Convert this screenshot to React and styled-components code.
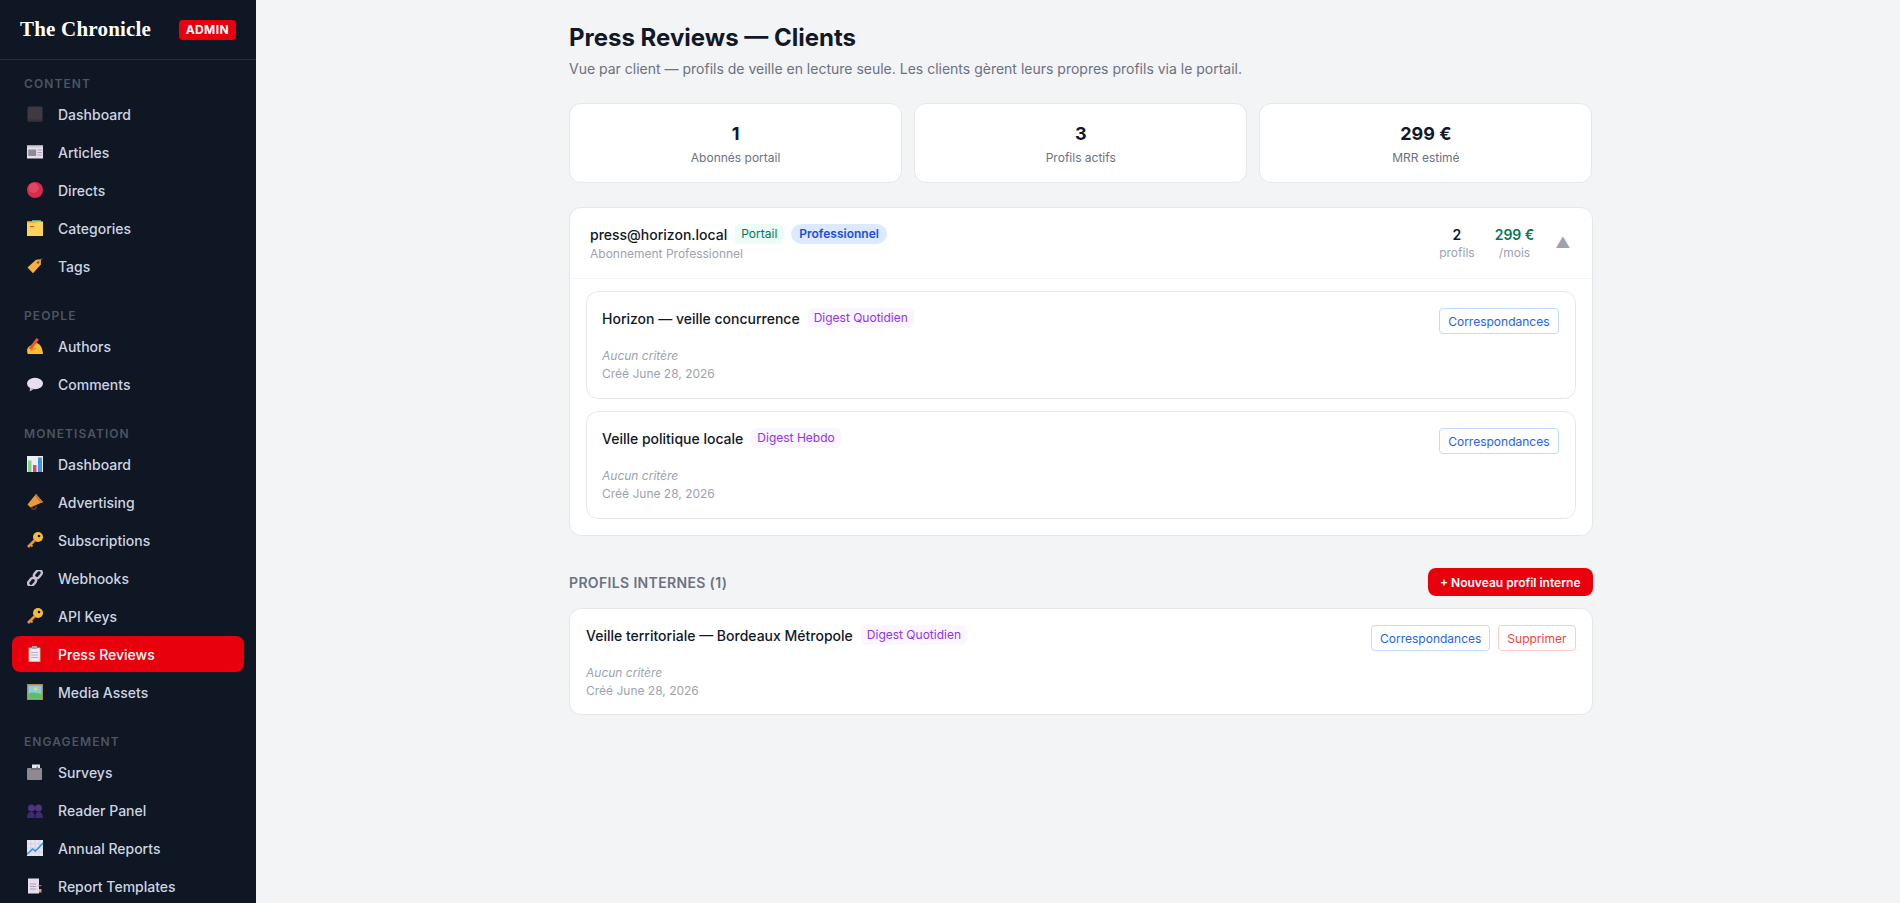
import styled, { createGlobalStyle } from "styled-components";

const GlobalStyle = createGlobalStyle`
  html, body { margin: 0; padding: 0; height: 100%; overflow: hidden; }
  body { font-family: Inter, "Liberation Sans", sans-serif; background: #f3f4f6; color: #111827; }
  * { box-sizing: border-box; }
`;

const Svg = ({ children }) => <IconSvg viewBox="0 0 16 16">{children}</IconSvg>;

const icons = {
  square: <Svg><rect x="0.5" y="0.5" width="15" height="15" rx="1.5" fill="#3d3a42" /><rect x="0.5" y="13.5" width="15" height="2" rx="1" fill="#322f37" /></Svg>,
  news: <Svg><rect y="1.5" width="16" height="13" fill="#e6e0ea" /><rect y="1.5" width="16" height="2" fill="#cfc8d6" /><rect x="1.2" y="5.5" width="8" height="6.5" fill="#8f8a98" /><path d="M10.5 6h4.5M10.5 8.5h4.5M10.5 11h4.5" stroke="#a9a3b2" /></Svg>,
  red: <Svg><circle cx="8" cy="8" r="8" fill="#d92c4c" /><circle cx="6.5" cy="6" r="5" fill="#ef5a72" opacity=".55" /></Svg>,
  folder: <Svg><rect x="5" y="0" width="9" height="2.5" fill="#5aa469" /><rect y="1.5" width="16" height="14.5" fill="#fdd35c" /><rect y="1.5" width="9" height="1.6" fill="#f2b63c" /><rect x="3" y="6" width="4" height="1.2" fill="#e4573d" /></Svg>,
  tag: <Svg><path d="M0.5 9.5 9 1.8l5-.5-.2 5.3-7.8 8.6z" fill="#f8b13f" /><circle cx="11" cy="4.5" r="1.3" fill="#8a5a20" /><path d="M11.5 4 15 .5" stroke="#888" /></Svg>,
  writing: <Svg><path d="M.8 16c-1.3-3-.8-6.5 1.7-7.8l6-3.2c3.7-.5 7 4 7.5 11z" fill="#fbc02d" /><path d="M1.5 10.5 9.5 0l2.4 1.8-7.2 10z" fill="#ea5a2e" /><path d="M3.5 13 9 10" stroke="#e88a20" strokeWidth="1.2" /></Svg>,
  comment: <Svg><ellipse cx="8" cy="7.5" rx="8" ry="5.7" fill="#e6def2" /><path d="M3 11.5l-.3 4 4.5-2.8z" fill="#c7bcd8" /></Svg>,
  chart: <Svg><rect width="16" height="16" fill="#f0eef3" /><rect x="1" y="4.5" width="3.5" height="11.5" fill="#7ed67e" /><rect x="6" y="9" width="3.5" height="7" fill="#ea3f86" /><rect x="11" y="1.5" width="4" height="14.5" fill="#3b98db" /></Svg>,
  mega: <Svg><path d="M9 0 16 8 3.5 13.5.5 10.5z" fill="#e99a3d" /><path d="M9 0 16 8l-2.5 1.1L8 1.5z" fill="#c9752a" /><path d="M4.5 13c.2 3.5 4.2 3.2 5-.8" fill="none" stroke="#5c3a22" strokeWidth="1.8" /></Svg>,
  key: <Svg><circle cx="11" cy="5" r="5" fill="#f6bd3a" /><circle cx="12" cy="4" r="1.3" fill="#0f1624" /><path d="M8 8 1 15" stroke="#ef9330" strokeWidth="2.6" /><path d="M3.5 12.5l2 2" stroke="#ef9330" strokeWidth="1.8" /></Svg>,
  link: <Svg><g fill="none" stroke="#c9bfd6" strokeWidth="2.4"><rect x="8.2" y="-0.4" width="5.6" height="9" rx="2.8" transform="rotate(40 11 4)" /><rect x="2.2" y="7.4" width="5.6" height="9" rx="2.8" transform="rotate(40 5 12)" /></g></Svg>,
  clip: <Svg><rect x="1.5" y="1.5" width="12" height="14.5" rx=".5" fill="#d9a06f" /><rect x="2.2" y="2.2" width="10.6" height="13" fill="#efe9f5" /><rect x="5" y="0" width="5" height="3" fill="#a9a3b2" /><path d="M4 6.5h7M4 9h7M4 11.5h7" stroke="#b5afbe" /></Svg>,
  picture: <Svg><rect width="16" height="16" fill="#b08a5a" /><rect x="1.5" y="1.5" width="13" height="13" fill="#7fd0ee" /><circle cx="8.5" cy="5" r="1.8" fill="#fbd24e" /><path d="M1.5 14.5V10c4-3 8-1 13 0v4.5z" fill="#5fbf5f" /></Svg>,
  ballot: <Svg><rect x="5" y="0.5" width="8" height="7" fill="#e8e4ec" /><path d="M7 4.5l1.5 1.2L11 2.5" stroke="#2faa5e" strokeWidth="1.2" fill="none" /><rect y="4" width="15" height="12" rx="1" fill="#8f8a92" /><rect x="4" y="4.5" width="9" height="1" fill="#55505a" /></Svg>,
  people: <Svg><circle cx="4.5" cy="6" r="3.5" fill="#4b3483" /><circle cx="11.5" cy="6" r="3.5" fill="#4b3483" /><path d="M0 16c0-8 7.6-8 7.6-2v2zM8.4 16v-2c0-6 7.6-6 7.6 2z" fill="#3f2a74" /></Svg>,
  trend: <Svg><rect width="16" height="16" fill="#e9e5ef" /><path d="M4 0v16M8 0v16M12 0v16M0 4h16M0 8h16M0 12h16" stroke="#cfc8da" strokeWidth=".6" /><path d="M0 14.5 5.5 9l3 2L16 3" fill="none" stroke="#3b98db" strokeWidth="1.6" /></Svg>,
  pages: <Svg><rect x="1" y="0.5" width="11" height="15" fill="#e6deed" /><path d="M3 6h6M3 8.5h6M3 11h6" stroke="#a79fb2" /><rect x="11.5" y="7" width="3" height="1.2" fill="#e4573d" /><rect x="12" y="11" width="2.5" height="3.5" fill="#d9a35c" /></Svg>,
};

const sections = [
  { title: "CONTENT", items: [["square", "Dashboard"], ["news", "Articles"], ["red", "Directs"], ["folder", "Categories"], ["tag", "Tags"]] },
  { title: "PEOPLE", items: [["writing", "Authors"], ["comment", "Comments"]] },
  { title: "MONETISATION", items: [["chart", "Dashboard"], ["mega", "Advertising"], ["key", "Subscriptions"], ["link", "Webhooks"], ["key", "API Keys"], ["clip", "Press Reviews", true], ["picture", "Media Assets"]] },
  { title: "ENGAGEMENT", items: [["ballot", "Surveys"], ["people", "Reader Panel"], ["trend", "Annual Reports"], ["pages", "Report Templates"]] },
];

const stats = [["1", "Abonnés portail"], ["3", "Profils actifs"], ["299 €", "MRR estimé"]];

const clientProfiles = [
  { name: "Horizon — veille concurrence", digest: "Digest Quotidien" },
  { name: "Veille politique locale", digest: "Digest Hebdo" },
];

const ProfileBody = ({ name, digest, children }) => (
  <ProfileTop>
    <div>
      <ProfileTitle>
        <ProfileName>{name}</ProfileName>
        <DigestBadge>{digest}</DigestBadge>
      </ProfileTitle>
      <Criteria>Aucun critère</Criteria>
      <Created>Créé June 28, 2026</Created>
    </div>
    <Actions>{children}</Actions>
  </ProfileTop>
);

export default function App() {
  return (
    <>
      <GlobalStyle />
      <Layout>
        <Sidebar>
          <Brand>
            <Logo>The Chronicle</Logo>
            <AdminBadge>ADMIN</AdminBadge>
          </Brand>
          <Nav>
            {sections.map((s) => (
              <Section key={s.title}>
                <SectionTitle>{s.title}</SectionTitle>
                {s.items.map(([icon, label, active]) => (
                  <NavItem key={label + icon} $active={active}>
                    {icons[icon]}
                    {label}
                  </NavItem>
                ))}
              </Section>
            ))}
          </Nav>
        </Sidebar>
        <Main>
          <Content>
            <Title>Press Reviews — Clients</Title>
            <Subtitle>Vue par client — profils de veille en lecture seule. Les clients gèrent leurs propres profils via le portail.</Subtitle>
            <Stats>
              {stats.map(([value, label]) => (
                <StatCard key={label}>
                  <StatValue>{value}</StatValue>
                  <StatLabel>{label}</StatLabel>
                </StatCard>
              ))}
            </Stats>
            <ClientCard>
              <ClientHeader>
                <div>
                  <ClientLine>
                    <ClientEmail>press@horizon.local</ClientEmail>
                    <PortalBadge>Portail</PortalBadge>
                    <PlanBadge>Professionnel</PlanBadge>
                  </ClientLine>
                  <ClientPlan>Abonnement Professionnel</ClientPlan>
                </div>
                <ClientMeta>
                  <Metric>
                    <MetricValue>2</MetricValue>
                    <MetricLabel>profils</MetricLabel>
                  </Metric>
                  <Metric>
                    <MetricValue $green>299 €</MetricValue>
                    <MetricLabel>/mois</MetricLabel>
                  </Metric>
                  <Chevron>▲</Chevron>
                </ClientMeta>
              </ClientHeader>
              <ClientBody>
                {clientProfiles.map((p) => (
                  <ProfileCard key={p.name}>
                    <ProfileBody {...p}>
                      <SmallButton>Correspondances</SmallButton>
                    </ProfileBody>
                  </ProfileCard>
                ))}
              </ClientBody>
            </ClientCard>
            <InternalHeader>
              <InternalTitle>PROFILS INTERNES (1)</InternalTitle>
              <PrimaryButton>+ Nouveau profil interne</PrimaryButton>
            </InternalHeader>
            <InternalCard>
              <ProfileBody name="Veille territoriale — Bordeaux Métropole" digest="Digest Quotidien">
                <SmallButton>Correspondances</SmallButton>
                <SmallButton $danger>Supprimer</SmallButton>
              </ProfileBody>
            </InternalCard>
          </Content>
        </Main>
      </Layout>
    </>
  );
}

const Layout = styled.div`
  display: flex;
  height: 903px;
  overflow: hidden;
`;

const Sidebar = styled.aside`
  width: 256px;
  flex-shrink: 0;
  height: 100%;
  overflow: hidden;
  background: #0f1624;
`;

const Brand = styled.div`
  height: 60px;
  padding: 0 20px;
  display: flex;
  align-items: center;
  justify-content: space-between;
  border-bottom: 1px solid #262d3b;
`;

const Logo = styled.span`
  font-family: "Liberation Serif", serif;
  font-weight: 700;
  font-size: 21px;
  letter-spacing: 0.2px;
  color: #fff;
`;

const AdminBadge = styled.span`
  background: #e8000d;
  color: #fff;
  font-size: 12px;
  font-weight: 700;
  line-height: 20px;
  padding: 0 7px;
  border-radius: 4px;
  letter-spacing: 0.4px;
`;

const Nav = styled.nav`
  padding: 17px 12px 0;
`;

const Section = styled.div`
  margin-bottom: 25px;
`;

const SectionTitle = styled.div`
  font-size: 12px;
  font-weight: 600;
  letter-spacing: 1.08px;
  line-height: 14px;
  color: #4b5563;
  padding-left: 12px;
  margin-bottom: 5px;
`;

const NavItem = styled.div`
  height: 36px;
  margin-bottom: 2px;
  display: flex;
  align-items: center;
  gap: 15px;
  padding-left: 15px;
  border-radius: 8px;
  font-size: 14px;
  font-weight: 500;
  color: ${(p) => (p.$active ? "#fff" : "#cbd5e1")};
  background: ${(p) => (p.$active ? "#e8000d" : "transparent")};
`;

const IconSvg = styled.svg`
  width: 16px;
  height: 16px;
  flex-shrink: 0;
`;

const Main = styled.main`
  flex: 1;
  padding: 24px 0 0 313px;
`;

const Content = styled.div`
  width: 1023.5px;
`;

const Title = styled.h1`
  margin: 0;
  font-size: 24px;
  font-weight: 700;
  line-height: 28px;
  color: #111827;
`;

const Subtitle = styled.p`
  margin: 7px 0 24px;
  font-size: 14px;
  line-height: 20px;
  color: #6b7280;
`;

const Stats = styled.div`
  display: grid;
  grid-template-columns: repeat(3, 1fr);
  gap: 12px;
  margin-bottom: 24px;
`;

const StatCard = styled.div`
  height: 80px;
  padding-top: 16px;
  background: #fff;
  border: 1px solid #e5e7eb;
  border-radius: 12px;
  text-align: center;
`;

const StatValue = styled.div`
  font-size: 18px;
  font-weight: 700;
  line-height: 28px;
  color: #111827;
`;

const StatLabel = styled.div`
  font-size: 12px;
  line-height: 16px;
  margin-top: 2px;
  color: #6b7280;
`;

const ClientCard = styled.section`
  background: #fff;
  border: 1px solid #e5e7eb;
  border-radius: 12px;
  overflow: hidden;
`;

const ClientHeader = styled.div`
  height: 71px;
  padding: 0 20px;
  display: flex;
  align-items: center;
  justify-content: space-between;
  border-bottom: 1px solid #f3f4f6;
`;

const ClientLine = styled.div`
  display: flex;
  align-items: center;
  gap: 8px;
`;

const ClientEmail = styled.span`
  font-size: 14px;
  font-weight: 500;
  color: #111827;
`;

const Pill = styled.span`
  font-size: 12px;
  line-height: 20px;
  padding: 0 8px;
`;

const PortalBadge = styled(Pill)`
  color: #047857;
  background: #ecfdf5;
  border-radius: 4px;
  padding: 0 6px;
`;

const PlanBadge = styled(Pill)`
  color: #1d4ed8;
  background: #dbeafe;
  border-radius: 10px;
  font-weight: 600;
`;

const ClientPlan = styled.div`
  font-size: 12px;
  line-height: 16px;
  margin-top: 2px;
  color: #9ca3af;
`;

const ClientMeta = styled.div`
  display: flex;
  align-items: center;
  gap: 20px;
`;

const Metric = styled.div`
  text-align: center;
`;

const MetricValue = styled.div`
  font-size: 14px;
  line-height: 20px;
  font-weight: 600;
  color: ${(p) => (p.$green ? "#047857" : "#111827")};
`;

const MetricLabel = styled.div`
  font-size: 12px;
  line-height: 16px;
  color: #9ca3af;
`;

const Chevron = styled.span`
  font-size: 15px;
  margin: 0 1px 1px 1px;
  color: #9ca3af;
`;

const ClientBody = styled.div`
  display: flex;
  flex-direction: column;
  gap: 12px;
  padding: 12px 16px 16px;
`;

const ProfileCard = styled.div`
  height: 108px;
  padding: 16px 16px 16px 15px;
  border: 1px solid #e5e7eb;
  border-radius: 12px;
`;

const ProfileTop = styled.div`
  display: flex;
  justify-content: space-between;
  align-items: flex-start;
`;

const ProfileTitle = styled.div`
  display: flex;
  align-items: center;
  gap: 8px;
  margin-bottom: 19px;
`;

const ProfileName = styled.span`
  font-size: 14px;
  font-weight: 500;
  color: #111827;
`;

const DigestBadge = styled(Pill)`
  color: #9333ea;
  background: #faf5ff;
  border-radius: 6px;
  padding: 0 6px;
`;

const Criteria = styled.div`
  font-size: 12px;
  line-height: 18px;
  font-style: italic;
  color: #9ca3af;
`;

const Created = styled.div`
  font-size: 12px;
  line-height: 18px;
  color: #9ca3af;
`;

const Actions = styled.div`
  display: flex;
  gap: 8px;
`;

const SmallButton = styled.button`
  height: 26px;
  padding: 0 8px;
  font-family: inherit;
  font-size: 12px;
  background: #fff;
  border: 1px solid ${(p) => (p.$danger ? "#fecaca" : "#bfdbfe")};
  border-radius: 4px;
  color: ${(p) => (p.$danger ? "#ef4444" : "#2563eb")};
`;

const InternalHeader = styled.div`
  margin: 32px 0 12px;
  display: flex;
  align-items: center;
  justify-content: space-between;
`;

const InternalTitle = styled.h2`
  margin: 0;
  font-size: 14px;
  font-weight: 600;
  letter-spacing: 0.35px;
  color: #6b7280;
`;

const PrimaryButton = styled.button`
  height: 28px;
  padding: 0 12px;
  font-family: inherit;
  font-size: 12px;
  font-weight: 600;
  color: #fff;
  background: #e8000d;
  border: none;
  border-radius: 8px;
`;

const InternalCard = styled.section`
  padding: 16px;
  height: 107px;
  background: #fff;
  border: 1px solid #e5e7eb;
  border-radius: 12px;
`;
